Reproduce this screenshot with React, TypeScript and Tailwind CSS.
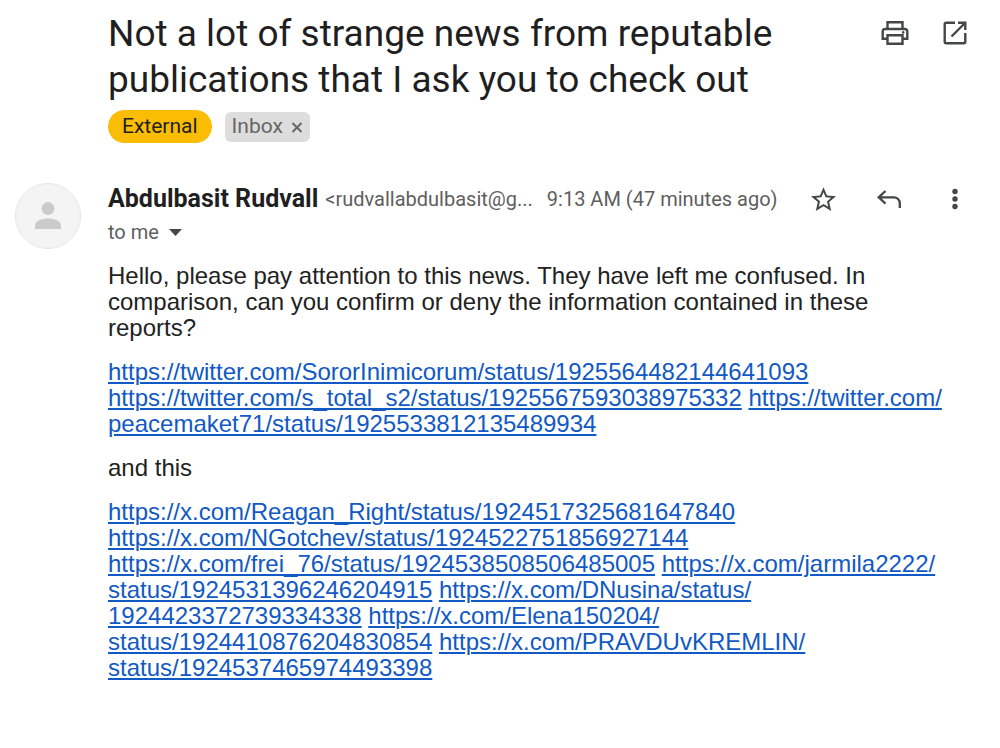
import type { ReactNode } from "react";

interface LinkItem {
  // a link may only wrap between its parts
  parts: string[];
}

const twitterLinks: LinkItem[] = [
  { parts: ["https://twitter.com/SororInimicorum/status/1925564482144641093"] },
  { parts: ["https://twitter.com/s_total_s2/status/1925567593038975332"] },
  { parts: ["https://twitter.com/", "peacemaket71/status/1925533812135489934"] },
];

const xLinks: LinkItem[] = [
  { parts: ["https://x.com/Reagan_Right/status/1924517325681647840"] },
  { parts: ["https://x.com/NGotchev/status/1924522751856927144"] },
  { parts: ["https://x.com/frei_76/status/1924538508506485005"] },
  { parts: ["https://x.com/jarmila2222/", "status/1924531396246204915"] },
  { parts: ["https://x.com/DNusina/status/", "1924423372739334338"] },
  { parts: ["https://x.com/Elena150204/", "status/1924410876204830854"] },
  { parts: ["https://x.com/PRAVDUvKREMLIN/", "status/1924537465974493398"] },
];

function IconButton({ label, children }: { label: string; children: ReactNode }) {
  return (
    <button
      type="button"
      aria-label={label}
      className="flex size-8 shrink-0 items-center justify-center text-[#444746]"
    >
      {children}
    </button>
  );
}

function LinkList({ links }: { links: LinkItem[] }) {
  return (
    <p>
      {links.map((link) => (
        <span key={link.parts.join("")}>
          <a
            href={link.parts.join("")}
            className="text-[#1159c4] underline decoration-2 underline-offset-2"
          >
            {link.parts.map((part, index) => (
              <span key={part}>
                {index > 0 && <wbr />}
                <span className="whitespace-nowrap">{part}</span>
              </span>
            ))}
          </a>{" "}
        </span>
      ))}
    </p>
  );
}

export default function App() {
  return (
    <main className="min-h-screen bg-white pt-[11px] pr-[29px] pb-16 pl-[15px] font-[Roboto,sans-serif] text-[#1f1f1f]">
      {/* Subject */}
      <header className="flex items-start pl-[93px]">
        <div className="min-w-0 flex-1">
          <h1 className="max-w-[700px] text-[37px] leading-[46px] font-normal">
            Not a lot of strange news from reputable publications that I ask you to check out
          </h1>
          <div className="mt-[7px] flex items-center gap-[13px] text-[21px]">
            <span className="flex h-[33px] items-center rounded-full bg-[#fbbc04] px-[14px]">
              External
            </span>
            <span className="flex h-[30px] items-center gap-2 rounded-md bg-[#dddddd] px-[7px] text-[#666666]">
              Inbox
              <button type="button" aria-label="Remove label Inbox">
                <svg width="12" height="12" viewBox="0 0 12 12" fill="none" stroke="currentColor" strokeWidth="2">
                  <path d="M1.5 2l9 9M10.5 2l-9 9" />
                </svg>
              </button>
            </span>
          </div>
        </div>
        <div className="flex gap-7 pt-[6px]">
          <IconButton label="Print all">
            <svg width="28" height="24" viewBox="0 0 28 24" fill="none" stroke="currentColor" strokeWidth="2.4">
              <path d="M6.5 8V1.2h15V8" />
              <path d="M6.5 17.8H1.7V10.500a2.500 2.500 0 0 1 2.500-2.500h19.600a2.500 2.500 0 0 1 2.500 2.500v7.300h-4.8" />
              <path d="M6.5 14.2h15v8.6h-15z" />
              <circle cx="22.2" cy="11.4" r="1.3" fill="currentColor" stroke="none" />
            </svg>
          </IconButton>
          <IconButton label="In new window">
            <svg width="24" height="24" viewBox="0 0 24 24" fill="none" stroke="currentColor" strokeWidth="2.4">
              <path d="M12 1.7H3.2a1.5 1.5 0 0 0-1.5 1.5v17.6a1.5 1.5 0 0 0 1.5 1.5h17.6a1.5 1.5 0 0 0 1.5-1.5V12" />
              <path d="M15 1.7h7.3V9M22 2L8.500 15.5" />
            </svg>
          </IconButton>
        </div>
      </header>

      {/* Sender */}
      <section className="mt-[40px] flex items-start gap-[27px]">
        <div className="flex size-[66px] shrink-0 items-center justify-center rounded-full border border-[#e6e6e6] bg-[#f4f4f4]">
          <svg width="26" height="28" viewBox="0 0 26 28" fill="#cbcbcb">
            <circle cx="13" cy="6.5" r="6.5" />
            <path d="M0 27v-3.500C0 19 7 16.500 13 16.500S26 19 26 23.500V27z" />
          </svg>
        </div>
        <div className="min-w-0 flex-1">
          <div className="flex h-8 items-center">
            <h2 className="shrink-0 text-[25px] font-bold">Abdulbasit Rudvall</h2>
            <span className="ml-[7px] min-w-0 truncate text-[20px] text-[#5e5e5e]">
              &lt;rudvallabdulbasit@g...
            </span>
            <time className="ml-[14px] shrink-0 text-[20px] text-[#5e5e5e]">
              9:13 AM (47 minutes ago)
            </time>
            <div className="ml-auto flex gap-[34px]">
              <IconButton label="Star">
                <svg width="25" height="24" viewBox="2 2 20 19" fill="currentColor">
                  <path d="M22 9.24l-7.19-.62L12 2 9.19 8.63 2 9.24l5.46 4.73L5.82 21 12 17.27 18.18 21l-1.63-7.03L22 9.24zM12 15.4l-3.76 2.27 1-4.28-3.32-2.88 4.38-.38L12 6.1l1.71 4.04 4.38.38-3.32 2.88 1 4.28L12 15.4z" />
                </svg>
              </IconButton>
              <IconButton label="Reply">
                <svg width="24" height="18" viewBox="0 0 24 18" fill="none" stroke="currentColor" strokeWidth="2.3">
                  <path d="M8.500 1L1.700 7.300l6.800 6.300M2 7.300h14.800a6 6 0 0 1 6 6V18" />
                </svg>
              </IconButton>
              <IconButton label="More">
                <svg width="6" height="22" viewBox="0 0 6 22" fill="currentColor">
                  <circle cx="3" cy="3.500" r="2.700" />
                  <circle cx="3" cy="11" r="2.700" />
                  <circle cx="3" cy="18.500" r="2.700" />
                </svg>
              </IconButton>
            </div>
          </div>
          <div className="flex h-[34px] items-center gap-[10px] text-[20px] text-[#5e5e5e]">
            to me
            <button type="button" aria-label="Show details">
              <svg width="13" height="7" viewBox="0 0 13 7" fill="#444746">
                <path d="M0 0h13L6.500 7z" />
              </svg>
            </button>
          </div>
        </div>
      </section>

      {/* Message */}
      <article className="mt-[14px] flex flex-col gap-[18px] pr-[11px] pl-[93px] font-['Liberation_Sans',sans-serif] text-[24px] leading-[26px] text-[#222222]">
        <p>
          Hello, please pay attention to this news. They have left me confused. In comparison, can you
          confirm or deny the information contained in these reports?
        </p>
        <LinkList links={twitterLinks} />
        <p>and this</p>
        <LinkList links={xLinks} />
      </article>
    </main>
  );
}
